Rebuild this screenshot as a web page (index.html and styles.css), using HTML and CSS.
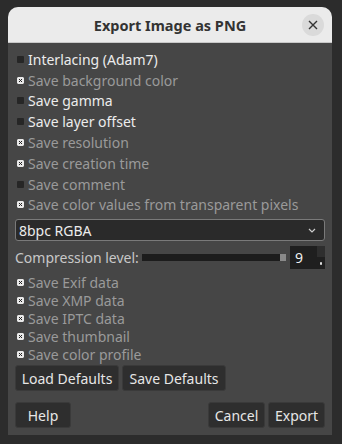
FILE: index.html
```html
<!DOCTYPE html>
<html lang="en">
<head>
    <meta charset="UTF-8" />
    <title>Export Image as PNG</title>
    <link rel="stylesheet" href="styles.css">
</head>
<body>
    <div class="dialog">
        <div class="titlebar">
            <span class="title">Export Image as PNG</span>
            <button class="close" aria-label="Close">
                <svg width="10" height="10" viewBox="0 0 10 10"><path d="M1 1L9 9M9 1L1 9" stroke="#333" stroke-width="1.4" /></svg>
            </button>
        </div>
        <div class="body">
            <div class="checks">
                <label class="check on"><span class="box"></span>Interlacing (Adam7)</label>
                <label class="check"><svg class="box" viewBox="0 0 7 7"><rect width="7" height="7" rx="1" fill="#e8e8e8" /><path d="M2 2L5 5M5 2L2 5" stroke="#222" stroke-width="1" /></svg>Save background color</label>
                <label class="check on"><span class="box"></span>Save gamma</label>
                <label class="check on"><span class="box"></span>Save layer offset</label>
                <label class="check"><svg class="box" viewBox="0 0 7 7"><rect width="7" height="7" rx="1" fill="#e8e8e8" /><path d="M2 2L5 5M5 2L2 5" stroke="#222" stroke-width="1" /></svg>Save resolution</label>
                <label class="check"><svg class="box" viewBox="0 0 7 7"><rect width="7" height="7" rx="1" fill="#e8e8e8" /><path d="M2 2L5 5M5 2L2 5" stroke="#222" stroke-width="1" /></svg>Save creation time</label>
                <label class="check"><span class="box"></span>Save comment</label>
                <label class="check"><svg class="box" viewBox="0 0 7 7"><rect width="7" height="7" rx="1" fill="#e8e8e8" /><path d="M2 2L5 5M5 2L2 5" stroke="#222" stroke-width="1" /></svg>Save color values from transparent pixels</label>
            </div>

            <div class="select">
                <span>8bpc RGBA</span>
                <svg width="8" height="5" viewBox="0 0 8 5"><path d="M1 1L4 4L7 1" stroke="#ccc" stroke-width="1.2" fill="none" /></svg>
            </div>

            <div class="compression">
                <span class="label">Compression level:</span>
                <div class="slider"><span class="handle"></span></div>
                <div class="spin">
                    <span class="value">9</span>
                    <div class="arrows">
                        <span class="up"></span>
                        <span class="down"></span>
                    </div>
                </div>
            </div>

            <div class="checks meta">
                <label class="check"><svg class="box" viewBox="0 0 7 7"><rect width="7" height="7" rx="1" fill="#e8e8e8" /><path d="M2 2L5 5M5 2L2 5" stroke="#222" stroke-width="1" /></svg>Save Exif data</label>
                <label class="check"><svg class="box" viewBox="0 0 7 7"><rect width="7" height="7" rx="1" fill="#e8e8e8" /><path d="M2 2L5 5M5 2L2 5" stroke="#222" stroke-width="1" /></svg>Save XMP data</label>
                <label class="check"><svg class="box" viewBox="0 0 7 7"><rect width="7" height="7" rx="1" fill="#e8e8e8" /><path d="M2 2L5 5M5 2L2 5" stroke="#222" stroke-width="1" /></svg>Save IPTC data</label>
                <label class="check"><svg class="box" viewBox="0 0 7 7"><rect width="7" height="7" rx="1" fill="#e8e8e8" /><path d="M2 2L5 5M5 2L2 5" stroke="#222" stroke-width="1" /></svg>Save thumbnail</label>
                <label class="check"><svg class="box" viewBox="0 0 7 7"><rect width="7" height="7" rx="1" fill="#e8e8e8" /><path d="M2 2L5 5M5 2L2 5" stroke="#222" stroke-width="1" /></svg>Save color profile</label>
            </div>

            <div class="defaults">
                <button class="btn">Load Defaults</button>
                <button class="btn">Save Defaults</button>
            </div>

            <div class="actions">
                <button class="btn help">Help</button>
                <div class="right">
                    <button class="btn">Cancel</button>
                    <button class="btn">Export</button>
                </div>
            </div>
        </div>
    </div>
</body>
</html>
```

FILE: styles.css
```css
body {
    margin: 0;
    padding: 7px 9px 0 8px;
    background-color: #2c2c2c;
    font-family: "Noto Sans", "Open Sans", sans-serif;
    font-size: 14px;
}

.dialog {
    width: 324px;
    height: 428px;
    border-radius: 10px 10px 0 0;
    background: #464646;
    overflow: hidden;
    display: flex;
    flex-direction: column;
}

.titlebar {
    height: 35px;
    background: #ebebeb;
    border-bottom: 1px solid #c8c8c8;
    display: flex;
    align-items: center;
    justify-content: center;
    position: relative;
}

.title {
    font-weight: bold;
    font-size: 14.5px;
    color: #333;
}

.close {
    position: absolute;
    right: 8px;
    top: 7px;
    width: 22px;
    height: 22px;
    border-radius: 50%;
    border: none;
    background: #dadada;
    padding: 0;
    display: flex;
    align-items: center;
    justify-content: center;
}

.body {
    flex: 1;
    padding: 6px 7px 0 7px;
    display: flex;
    flex-direction: column;
}

.checks {
    display: flex;
    flex-direction: column;
}

.check {
    display: flex;
    align-items: center;
    height: 20.8px;
    color: #9a9a9a;
    white-space: nowrap;
}

.check.on {
    color: #ececec;
}

.box {
    flex: none;
    width: 7px;
    height: 7px;
    margin: 0 4px 0 2px;
    background: #262626;
    border-radius: 1px;
}

.select {
    margin-top: 4px;
    height: 20px;
    border: 1px solid #7a7a7a;
    border-radius: 3px;
    background: #2a2a2a;
    color: #ececec;
    display: flex;
    align-items: center;
    justify-content: space-between;
    padding: 0 8px 0 3px;
}

.compression {
    display: flex;
    align-items: center;
    margin-top: 5px;
    height: 23px;
}

.compression .label {
    color: #c8c8c8;
    margin-right: 3px;
}

.slider {
    flex: 1;
    height: 7px;
    background: #1c1c1c;
    display: flex;
    justify-content: flex-end;
    align-items: center;
    margin-right: 4px;
}

.handle {
    width: 6px;
    height: 7px;
    background: #8a8a8a;
}

.spin {
    width: 35px;
    height: 23px;
    background: #1f1f1f;
    display: flex;
    align-items: center;
}

.spin .value {
    flex: 1;
    color: #f0f0f0;
    padding-left: 5px;
}

.arrows {
    width: 8px;
    height: 23px;
    display: flex;
    flex-direction: column;
    gap: 1px;
}

.arrows span {
    flex: 1;
    background: #2e2e2e;
}

.arrows .down {
    background: #1f1f1f radial-gradient(circle, #ddd 0 1px, transparent 1.5px);
}

.meta {
    margin-top: 4px;
}

.meta .check {
    height: 18px;
}

.defaults {
    display: flex;
    gap: 3px;
    margin-top: 2px;
}

.btn {
    font-family: inherit;
    font-size: 14px;
    color: #e6e6e6;
    background: #2e2e2e;
    border: 1px solid #3a3a3a;
    border-radius: 3px;
    height: 26px;
    padding: 0 5px;
}

.defaults .btn {
    width: 104px;
}

.actions {
    display: flex;
    justify-content: space-between;
    margin-top: 11px;
}

.help {
    width: 56px;
}

.right {
    display: flex;
    gap: 3px;
}

.right .btn {
    width: 57px;
}
```
